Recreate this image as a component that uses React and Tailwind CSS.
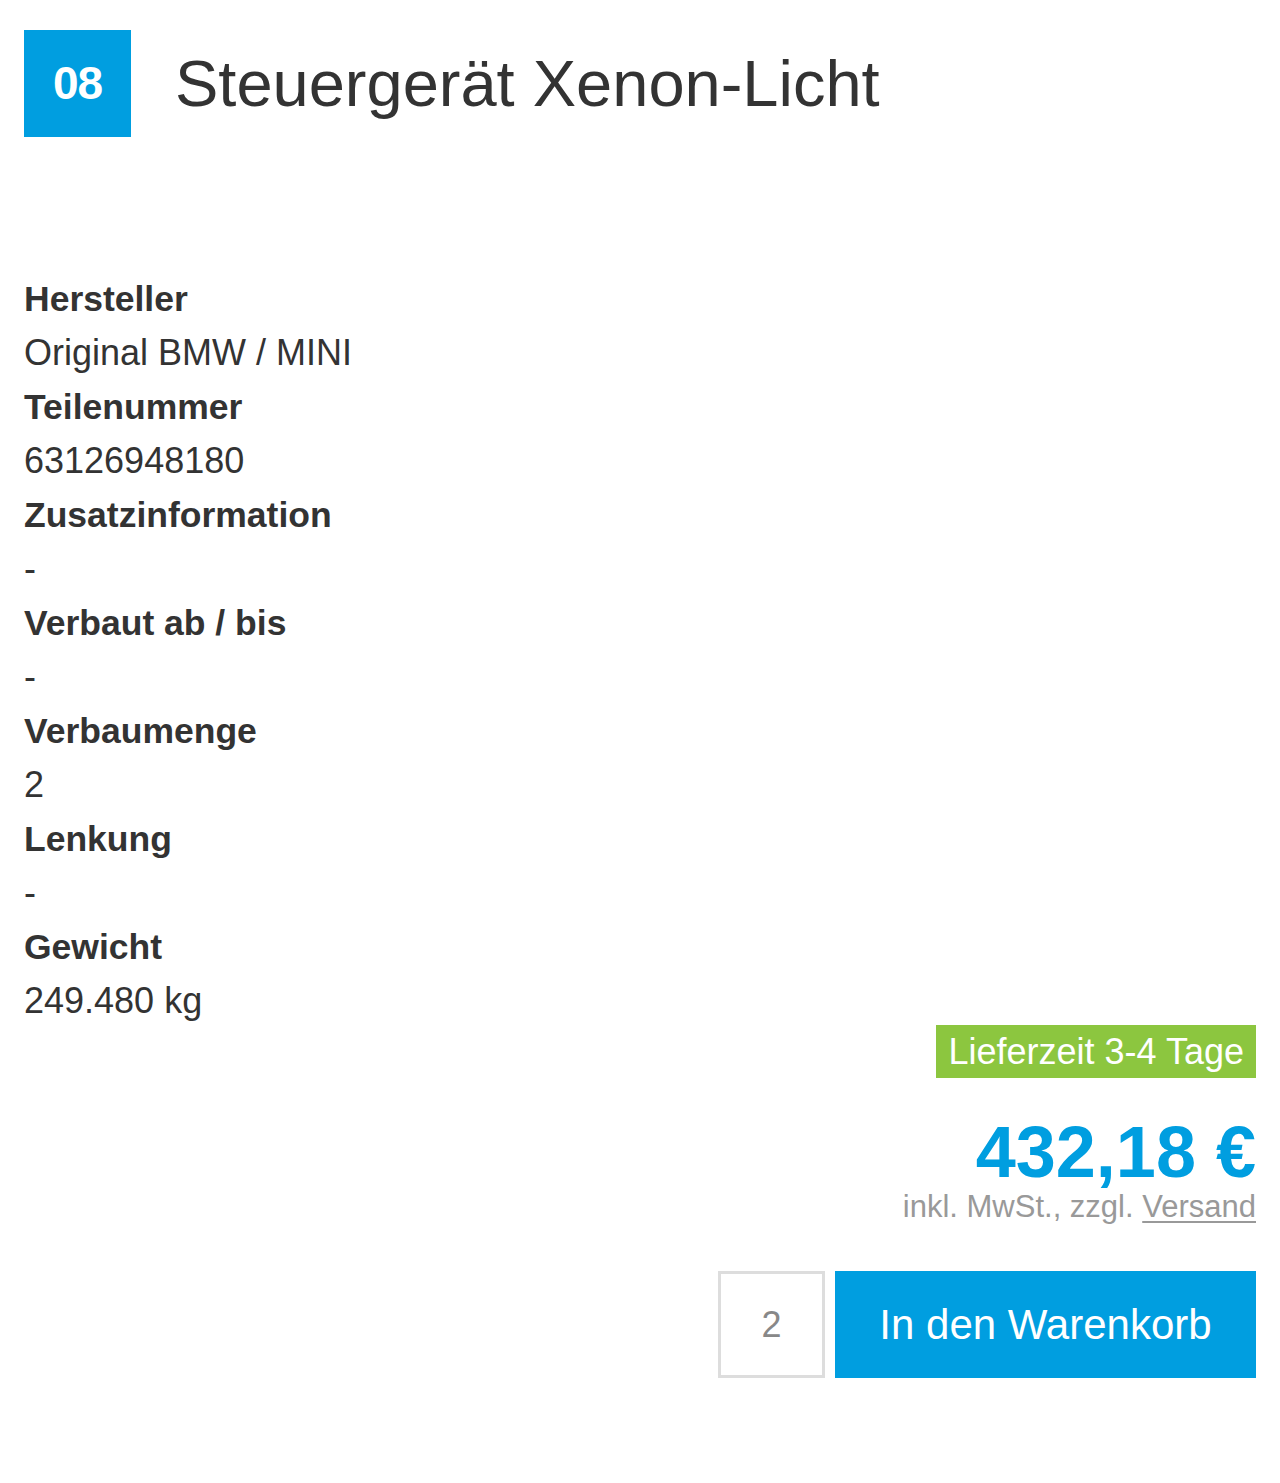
import React from 'react';

const specs = [
  { label: 'Hersteller', value: 'Original BMW / MINI' },
  { label: 'Teilenummer', value: '63126948180' },
  { label: 'Zusatzinformation', value: '-' },
  { label: 'Verbaut ab / bis', value: '-' },
  { label: 'Verbaumenge', value: '2' },
  { label: 'Lenkung', value: '-' },
  { label: 'Gewicht', value: '249.480 kg' },
];

export default function App() {
  return (
    <div className="w-full min-h-[1483px] bg-white px-6 pt-[30px] text-[#333] font-['Liberation_Sans',Arial,sans-serif]">
      {/* header */}
      <div className="flex items-center">
        <div className="flex h-[107px] w-[107px] items-center justify-center bg-[#009ee0] text-[46px] font-bold text-white tracking-[-1px]">
          08
        </div>
        <h1 className="ml-[44px] text-[65px] leading-none text-[#333]">Steuergerät Xenon-Licht</h1>
      </div>

      {/* specs */}
      <dl className="mt-[135px] text-[36px] leading-[54px]">
        {specs.map((s) => (
          <React.Fragment key={s.label}>
            <dt className="font-bold text-[35.5px]">{s.label}</dt>
            <dd>{s.value}</dd>
          </React.Fragment>
        ))}
      </dl>

      {/* buy box */}
      <div className="flex flex-col items-end mt-[-3px]">
        <div className="h-[53px] bg-[#8cc63f] px-[12px] text-[36px] leading-[53px] text-white">
          Lieferzeit 3-4 Tage
        </div>
        <div className="mt-[34px] text-[72px] font-bold leading-[80px] text-[#009ee0]">432,18 €</div>
        <div className="mt-[-1px] text-[31px] leading-[31px] text-[#999]">
          inkl. MwSt., zzgl.{' '}
          <a className="inline-block leading-[31px] underline underline-offset-[4px] decoration-[2px]">Versand</a>
        </div>
        <div className="mt-[49px] flex gap-[10px]">
          <input
            type="text"
            defaultValue="2"
            className="h-[107px] w-[107px] border-[3px] border-[#ddd] bg-white text-center text-[36px] text-[#888] outline-none"
          />
          <button className="h-[107px] w-[421px] bg-[#009ee0] text-[42px] text-white">In den Warenkorb</button>
        </div>
      </div>
    </div>
  );
}
